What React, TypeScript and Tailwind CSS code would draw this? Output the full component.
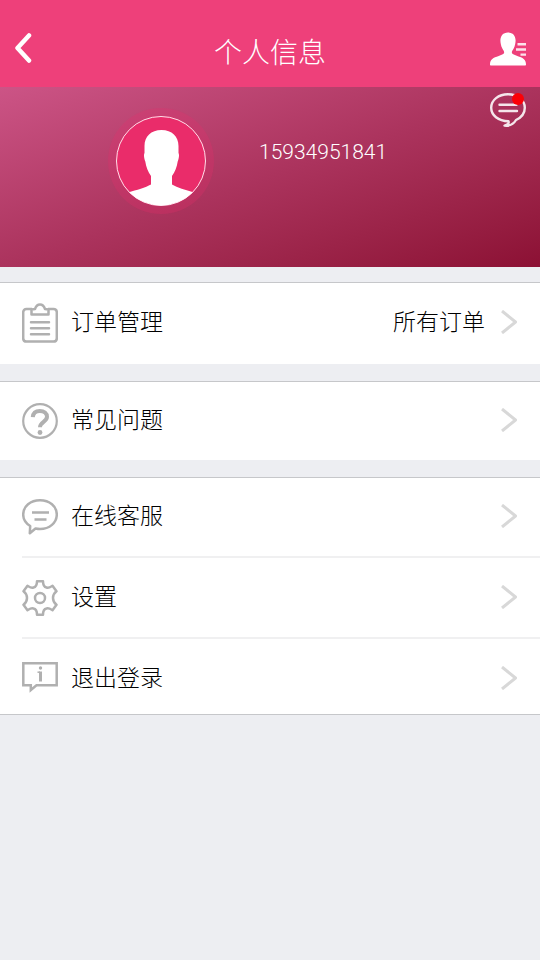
import type { ReactNode } from "react";

function BackIcon() {
  return (
    <svg width="18" height="32" viewBox="0 0 18 32" fill="none" stroke="#fff" strokeWidth="4.500" strokeLinecap="round" strokeLinejoin="round" aria-hidden="true">
      <path d="M15 2.500 L3.500 15 L15 27.500" />
    </svg>
  );
}

function ContactIcon() {
  return (
    <svg width="36" height="34" viewBox="0 0 36 34" aria-hidden="true">
      <path
        fill="#fff"
        d="M18 0.500c5 0 7.600 3.600 7.600 8 0 2.200-.6 5.500-1.800 7.700-.9 1.800-2 2.900-2 4 0 1.700 2 2.500 5.500 3.700 5.500 1.800 8.700 3.100 8.700 8.600 0 .6-.4 1-1 1H1c-.6 0-1-.4-1-1 0-5.500 3.200-6.800 8.700-8.600 3.500-1.200 5.500-2 5.500-3.700 0-1.100-1.100-2.200-2-4-1.200-2.200-1.800-5.500-1.800-7.700 0-4.400 2.600-8 7.600-8z"
      />
      <g stroke="#fff" strokeOpacity=".85" strokeWidth="2.400">
        <path d="M27.500 12.300H36M26 17.500h10M30.500 22.600H36" />
      </g>
    </svg>
  );
}

function MessageIcon() {
  return (
    <svg width="36" height="34" viewBox="0 0 36 34" fill="none" stroke="#fff" strokeOpacity=".88" strokeWidth="2.400" strokeLinecap="round" strokeLinejoin="round" aria-hidden="true">
      <path d="M18 1.300C8.500 1.300 1.200 7.200 1.200 14.700c0 7.600 7 13.200 17.300 13.600.7 1.600-.6 3.300-4 4.300 6.500.7 9.500-2.200 11.500-5.600 5.500-2.600 8.800-7 8.800-12.300C34.800 7.200 27.500 1.300 18 1.300z" />
      <path d="M9.500 11.700h17M9.500 18h17.500" />
    </svg>
  );
}

function Avatar() {
  return (
    <svg width="90" height="90" viewBox="0 0 90 90" aria-hidden="true">
      <defs>
        <clipPath id="avatar-clip">
          <circle cx="45" cy="45" r="44.500" />
        </clipPath>
      </defs>
      <circle cx="45" cy="45" r="45" fill="#ea2c6a" />
      <path
        clipPath="url(#avatar-clip)"
        fill="#fff"
        d="M45.500 14C56 14 62.500 20.500 62.500 30v7c.9 1.500.6 5-.8 8.500-.8 5.500-2.700 10.500-5.700 14.500v8.500c5.500 3 13 5.500 22 8V92H12V76.500c9-2.500 17.500-5 23-8V60c-3-4-4.900-9-5.700-14.500-1.400-3.500-1.700-7-.8-8.500v-7c0-9.500 6.500-16 17-16z"
      />
      <circle cx="45" cy="45" r="44.500" fill="none" stroke="#fff" strokeOpacity=".85" />
    </svg>
  );
}

function LineIcon({ children }: { children: ReactNode }) {
  return (
    <svg className="shrink-0" width="36" height="40" viewBox="0 0 36 40" fill="none" stroke="#b0b0b0" strokeWidth="2.500" strokeLinejoin="round" aria-hidden="true">
      {children}
    </svg>
  );
}

function OrdersIcon() {
  return (
    <LineIcon>
      <path d="M10 6H4.500C2.500 6 1.200 7.300 1.200 9.300v26c0 2 1.300 3.300 3.300 3.300h27c2 0 3.300-1.300 3.300-3.300v-26c0-2-1.300-3.300-3.300-3.300H26" />
      <path d="M9.500 11.500V6.500L13 6C14 3 15.500 1.500 18 1.500S22 3 23 6l3.500.5v5z" />
      <path strokeLinecap="round" d="M9 19.300h18M9 25.200h18M9 31.200h18" />
    </LineIcon>
  );
}

function HelpIcon() {
  return (
    <LineIcon>
      <circle cx="18" cy="20" r="16.800" strokeWidth="2.200" />
      <path strokeWidth="4" d="M10.800 16.200c.3-4.200 3-6.300 7-6.300 4.300 0 7.200 2.200 7.200 5.900 0 5-7 5.200-7 10.500" />
      <circle cx="18" cy="31.500" r="2.400" fill="#b0b0b0" stroke="none" />
    </LineIcon>
  );
}

function ChatIcon() {
  return (
    <LineIcon>
      <path d="M18 3.200c9.500 0 16.800 6 16.800 14.300S27.500 32 18 32c-1.500 0-3-.2-4.500-.5L7.800 36.300l.4-7.300C4 26.500 1.200 22.500 1.200 17.500 1.200 9.200 8.500 3.200 18 3.200z" />
      <path d="M10 15.500h17M12.500 22.500h12" />
    </LineIcon>
  );
}

function SettingsIcon() {
  return (
    <LineIcon>
      <path d="M15 3.200h6C21 7 22 9 24.500 9.500c2.500.8 4-.5 6-1.700l4 5.400c-2.500 1.800-3.500 3.800-3.500 6.800s1 5 3.500 6.800l-4 5.400c-2-1.200-3.500-2.500-6-1.700C22 31 21 33 21 36.800h-6C15 33 14 31 11.500 30.500c-2.500-.8-4 .5-6 1.700l-4-5.400C4 25 5 23 5 20s-1-5-3.500-6.800l4-5.400c2 1.200 3.500 2.500 6 1.700C14 9 15 7 15 3.200z" />
      <circle cx="18" cy="20" r="5" />
    </LineIcon>
  );
}

function LogoutIcon() {
  return (
    <LineIcon>
      <path strokeLinejoin="miter" d="M1.300 4.300h33.400v22H14.500L8.800 31v-4.700H1.300z" />
      <path d="M18.500 12.500V22.500" strokeWidth="3" />
      <path d="M15.500 13.200H18" strokeWidth="1.500" />
      <circle cx="18.500" cy="9" r="1.700" fill="#b0b0b0" stroke="none" />
    </LineIcon>
  );
}

function Chevron() {
  return (
    <svg className="mb-0.5 shrink-0" width="18" height="24" viewBox="0 0 18 24" fill="none" stroke="#d8d8d8" strokeWidth="3" strokeLinejoin="round" aria-hidden="true">
      <path d="M2 1 L15.500 12 L2 23" />
    </svg>
  );
}

type MenuRowProps = {
  icon: ReactNode;
  label: string;
  detail?: string;
  height?: string;
};

function MenuRow({ icon, label, detail, height = "h-[78px]" }: MenuRowProps) {
  return (
    <button type="button" className={`flex w-full items-center pr-[22px] text-left text-[23px] leading-8 ${height}`}>
      {icon}
      <span className="mb-1.5 ml-[13px] flex-1">{label}</span>
      {detail && <span className="mb-1.5 mr-[15px]">{detail}</span>}
      <Chevron />
    </button>
  );
}

export default function App() {
  return (
    <div className="min-h-screen bg-[#edeef2] font-['Noto_Sans_CJK_SC',sans-serif] font-light text-black">
      <header className="flex h-[87px] items-center justify-between bg-[#ee407a] px-3.5 pt-2.5 text-white">
        <button type="button" aria-label="返回" className="flex w-9">
          <BackIcon />
        </button>
        <h1 className="pt-1 text-[28px] font-light leading-10">个人信息</h1>
        <button type="button" aria-label="联系人" className="flex w-9">
          <ContactIcon />
        </button>
      </header>

      <section className="relative flex h-[180px] items-start bg-linear-to-br from-[#cc5486] via-[#ab335d] to-[#8c1034] pl-[20%] pt-[21px] text-white">
        <div className="rounded-full bg-[#ea2c6a]/25 p-2">
          <Avatar />
        </div>
        <p className="ml-[45px] mt-7 font-['Roboto',sans-serif] text-[21px] leading-8">15934951841</p>
        <button type="button" aria-label="消息" className="absolute right-3.5 top-1.5">
          <MessageIcon />
          <span className="absolute right-0.5 top-0 size-3 rounded-full bg-[#fb0007]" />
        </button>
      </section>

      <main className="flex flex-col gap-[17px] pt-[15px]">
        <section className="border-t border-[#c6c7ca] bg-white pl-[22px]">
          <MenuRow icon={<OrdersIcon />} label="订单管理" detail="所有订单" height="h-[81px] pb-0.5" />
        </section>
        <section className="border-t border-[#c6c7ca] bg-white pl-[22px]">
          <MenuRow icon={<HelpIcon />} label="常见问题" />
        </section>
        <section className="border-y border-[#c6c7ca] bg-white pl-[22px]">
          <div className="divide-y-2 divide-[#f0f0f1]">
            <MenuRow icon={<ChatIcon />} label="在线客服" height="h-20" />
            <MenuRow icon={<SettingsIcon />} label="设置" height="h-[81px]" />
            <MenuRow icon={<LogoutIcon />} label="退出登录" height="h-[75px] pt-1" />
          </div>
        </section>
      </main>
    </div>
  );
}
